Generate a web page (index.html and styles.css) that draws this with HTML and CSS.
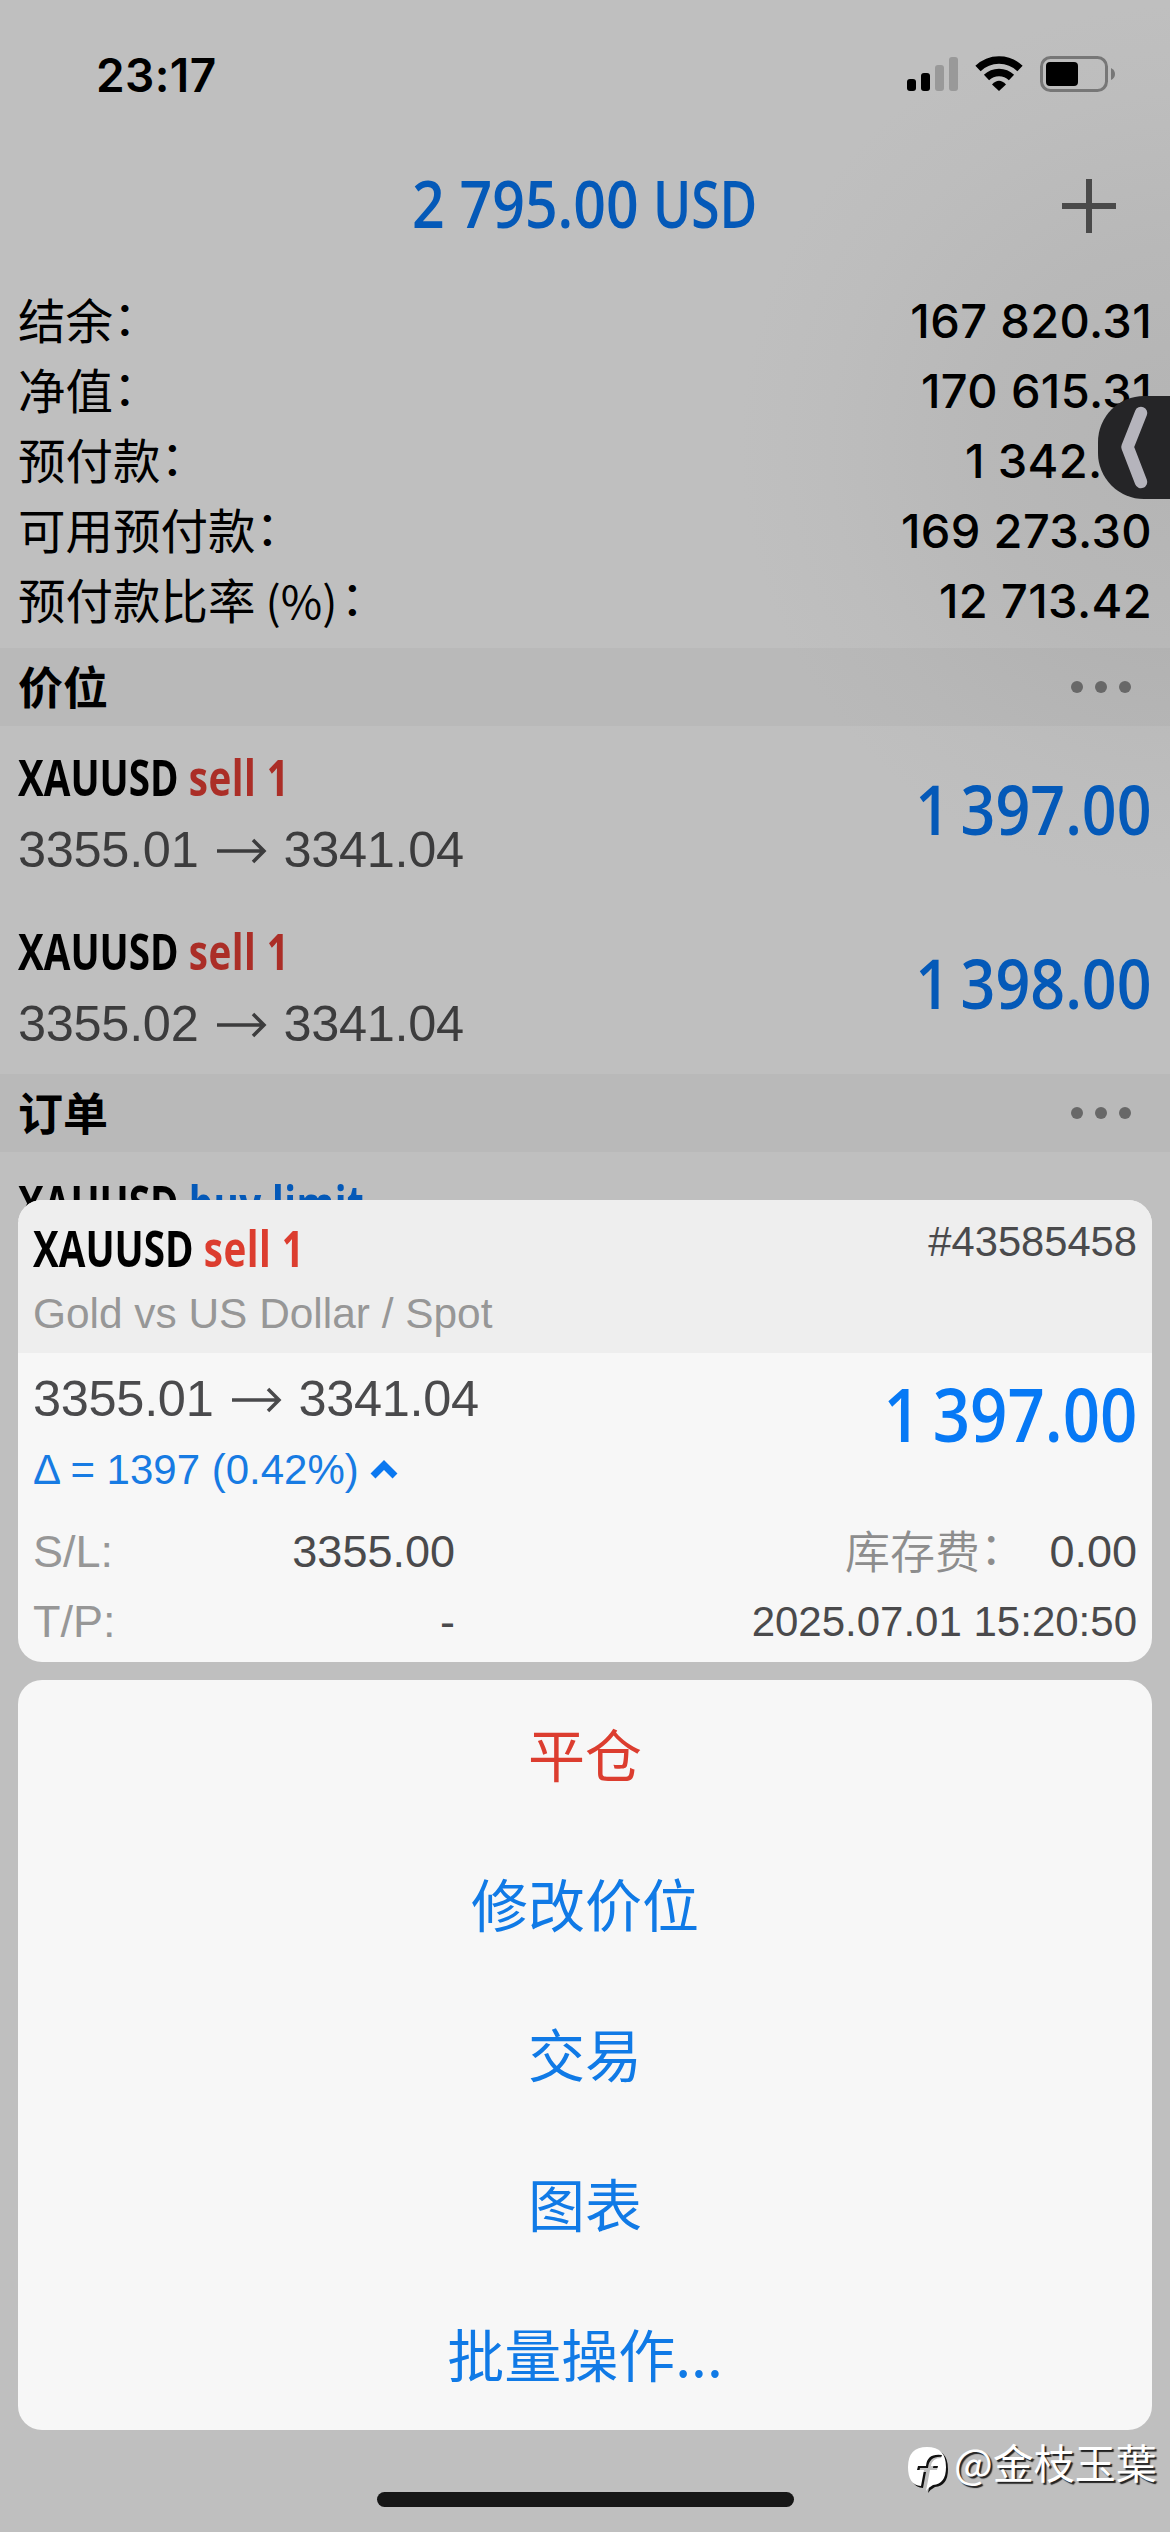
FILE: index.html
```html
<!DOCTYPE html>
<html lang="zh-CN">
<head>
<meta charset="utf-8">
<title>Trade</title>
<link rel="stylesheet" href="styles.css">
</head>
<body>
<div class="phone">
  <main class="screen">
    <header class="status">
      <span class="clock">23:17</span>
      <svg class="status-icons" width="212" height="40" viewBox="905 54 212 40">
        <rect x="907" y="79" width="9" height="12" rx="3"/>
        <rect x="921" y="73" width="9" height="18" rx="3"/>
        <rect x="935" y="65" width="9" height="26" rx="3" fill="#999"/>
        <rect x="949" y="57" width="9" height="34" rx="3" fill="#999"/>
        <path d="M978 68.500A30 30 0 0 1 1020 68.500M986.500 77.500A18 18 0 0 1 1011.500 77.500" fill="none" stroke="#000" stroke-width="7.500"/>
        <path d="M992 84.500Q999 77 1006 84.500L999 91Z"/>
        <rect x="1041.500" y="57.500" width="65" height="33" rx="9" fill="none" stroke="#777" stroke-width="3"/>
        <rect x="1046" y="62" width="32" height="24" rx="4"/>
        <path d="M1111 68Q1115 70 1115 74T1111 80Z" fill="#777"/>
      </svg>
    </header>

    <div class="titlebar">
      <h1 class="total"><span class="amount"><span>2 795.00</span></span><span class="unit"><span>USD</span></span></h1>
      <svg class="plus" width="54" height="54" viewBox="0 0 54 54"><path d="M27 0V54M0 27H54" stroke="#4a4a4a" stroke-width="6"/></svg>
    </div>

    <section class="summary">
      <div class="row"><span class="name">结余<i>：</i></span><span class="num">167 820.31</span></div>
      <div class="row"><span class="name">净值<i>：</i></span><span class="num">170 615.31</span></div>
      <div class="row"><span class="name">预付款<i>：</i></span><span class="num">1 342.01</span></div>
      <div class="row"><span class="name">可用预付款<i>：</i></span><span class="num">169 273.30</span></div>
      <div class="row"><span class="name">预付款比率<b>(%)</b><i>：</i></span><span class="num">12 713.42</span></div>
    </section>

    <div class="band"><h2>价位</h2><span class="dots"><u></u><u></u><u></u></span></div>

    <article class="position">
      <div class="deal">
        <p class="label">XAUUSD <span class="sell-dim">sell 1</span></p>
        <div class="prices"><span>3355.01</span><svg width="50" height="26" viewBox="0 0 50 26"><path d="M0 13H47M36 2L47 13L36 24"/></svg><span>3341.04</span></div>
      </div>
      <p class="profit">1 397.00</p>
    </article>

    <article class="position">
      <div class="deal">
        <p class="label">XAUUSD <span class="sell-dim">sell 1</span></p>
        <div class="prices"><span>3355.02</span><svg width="50" height="26" viewBox="0 0 50 26"><path d="M0 13H47M36 2L47 13L36 24"/></svg><span>3341.04</span></div>
      </div>
      <p class="profit">1 398.00</p>
    </article>

    <div class="band"><h2>订单</h2><span class="dots"><u></u><u></u><u></u></span></div>

    <article class="position">
      <p class="label">XAUUSD <span class="buy-dim">buy limit</span></p>
    </article>
  </main>

  <div class="handle">
    <svg width="72" height="104" viewBox="1098 396 72 104"><path d="M1141 413L1127.500 447L1141 482" fill="none" stroke="#b5b4bc" stroke-width="12.500" stroke-linecap="round" stroke-linejoin="round"/></svg>
  </div>

  <div class="sheet">
    <section class="card">
      <header class="card-head">
        <div>
          <p class="label">XAUUSD <span class="sell">sell 1</span></p>
          <p class="desc">Gold vs US Dollar / Spot</p>
        </div>
        <span class="ticket">#43585458</span>
      </header>
      <div class="card-main">
        <div>
          <div class="prices"><span>3355.01</span><svg width="50" height="26" viewBox="0 0 50 26"><path d="M0 13H47M36 2L47 13L36 24"/></svg><span>3341.04</span></div>
          <div class="delta"><span>Δ = 1397 (0.42%)</span><svg width="28" height="20" viewBox="0 0 28 20"><path d="M3 16L14 5L25 16" fill="none" stroke="#0b78f0" stroke-width="7"/></svg></div>
        </div>
        <p class="profit big">1 397.00</p>
      </div>
      <div class="facts">
        <span class="key">S/L:</span><span class="val">3355.00</span><span class="swap">库存费<i>：</i></span><span class="val">0.00</span>
        <span class="key">T/P:</span><span class="val">-</span><span class="time">2025.07.01 15:20:50</span>
      </div>
    </section>
    <nav class="menu">
      <a class="danger">平仓</a>
      <a>修改价位</a>
      <a>交易</a>
      <a>图表</a>
      <a>批量操作<em>...</em></a>
    </nav>
  </div>

  <div class="home"></div>
  <div class="watermark">
    <svg width="44" height="48" viewBox="0 0 44 48">
      <path d="M2 22Q2 2 21 2T40 22Q40 39 27 40Q23 42 20 46L24 25H31L32 21H25Q26 13 35 13L36 10Q21 8 20 21H12L11 25H18L15 41Q2 40 2 22Z" fill="#fff"/>
    </svg>
    <span>@金枝玉葉</span>
  </div>
</div>
</body>
</html>
```
FILE: styles.css
```css
* { box-sizing: border-box; margin: 0; padding: 0; }
body { width: 1170px; height: 2532px; overflow: hidden; background: #bfbfbf; }
i, em { font-style: normal; }

.phone {
  position: relative;
  width: 1170px;
  height: 2532px;
  overflow: hidden;
  background: radial-gradient(circle 440px at 1180px 445px, #b4b4b4 0%, #b8b8b8 45%, #bdbdbd 80%, #bfbfbf 100%);
  font-family: "Liberation Sans", "Noto Sans CJK SC", sans-serif;
  color: #000;
}
.phone svg { display: block; flex: none; }

/* condensed headings and amounts */
.label {
  width: max-content;
  height: 52px;
  font: 700 50.5px/45px "Open Sans", sans-serif;
  white-space: nowrap;
  transform: scaleX(.765);
  transform-origin: left;
}
.profit {
  height: 60px;
  font: 650 68.5px/53px "Open Sans", sans-serif;
  word-spacing: -6px;
  white-space: nowrap;
  color: #0459b8;
  transform: scaleX(.89);
  transform-origin: right;
}
.profit.big { font-size: 74px; line-height: 57px; color: #0779f5; transform: scaleX(.883); }
.sell-dim { color: #ab2e27; letter-spacing: .6px; }
.buy-dim { color: #0459b8; letter-spacing: .5px; }
.sell { color: #dc3d2f; letter-spacing: .6px; }

.screen { display: flex; flex-direction: column; }

.status { display: flex; justify-content: space-between; height: 150px; padding: 54px 53px 0 96px; }
.clock { font: 600 46px/42px Inter, sans-serif; letter-spacing: .4px; }

.titlebar { display: grid; grid-template-columns: 1fr auto 1fr; align-items: start; height: 138px; padding: 20px 54px 0; }
.total { grid-column: 2; display: flex; gap: 12px; font: 650 66px/65px "Open Sans", sans-serif; white-space: nowrap; color: #0459b8; }
.total span span { display: inline-block; transform-origin: left; }
.amount { width: 229px; }
.amount span { transform: scaleX(.866); }
.unit { width: 105px; }
.unit span { transform: scaleX(.78); }
.plus { justify-self: end; margin-top: 9px; }

.summary { height: 360px; padding: 0 18px; }
.row { display: flex; justify-content: space-between; height: 70px; }
.name { font-family: "Noto Sans CJK SC", sans-serif; font-size: 47.5px; line-height: 62px; white-space: nowrap; }
.name i { position: relative; top: -4px; }
.name b { font-weight: 400; font-size: 45px; margin: 0 3px 0 10px; }
.num { font-family: Inter, sans-serif; font-weight: 500; font-size: 47px; line-height: 66px; letter-spacing: .35px; }

.band { display: flex; justify-content: space-between; align-items: center; height: 78px; padding: 0 39px 0 18px; background: rgba(0, 0, 0, .032); }
.band h2 { height: 78px; font: 700 45px/75px "Noto Sans CJK SC", sans-serif; }
.dots { display: flex; gap: 12px; }
.dots u { width: 12px; height: 12px; border-radius: 50%; background: #686868; }

.position { display: flex; justify-content: space-between; height: 174px; padding: 28px 18px 0 18px; }
.prices { display: flex; align-items: center; height: 58px; font-size: 50.5px; line-height: 58px; letter-spacing: -.3px; color: #3c3c3d; }
.deal .prices { margin-top: 15px; }
.prices svg { margin: 1px 16px 0 19px; fill: none; stroke: currentColor; stroke-width: 3.5; }
.position .profit { margin-top: 28px; }

.handle { position: absolute; left: 1098px; top: 396px; width: 72px; height: 103px; border-radius: 46px 0 0 46px; background: #252527; }

.sheet { position: absolute; left: 18px; right: 18px; top: 1200px; display: flex; flex-direction: column; gap: 18px; }
.card { height: 462px; border-radius: 24px; overflow: hidden; background: #f7f7f7; }
.card-head { display: flex; justify-content: space-between; height: 153px; padding: 25px 15px 0 15px; background: #eee; }
.desc { margin-top: 13px; font-size: 42.4px; line-height: 48px; color: #979797; white-space: nowrap; }
.ticket { font-size: 41.7px; line-height: 34px; color: #4a4a4c; }
.card-main { display: flex; justify-content: space-between; height: 155px; padding: 17px 15px 0 15px; }
.card .prices { color: #4a4a4c; }
.delta { display: flex; align-items: center; margin-top: 16px; font-size: 42px; line-height: 52px; color: #177be3; }
.delta svg { margin: 0 0 0 11px; }
.profit.big { margin-top: 15px; }
.facts { display: grid; grid-template-columns: 130px 292px 1fr 112px; grid-auto-rows: 70px; padding: 9px 15px 0; font-size: 45px; line-height: 70px; color: #4a4a4c; white-space: nowrap; }
.key { color: #979797; }
.val { text-align: right; }
.swap { text-align: right; font-family: "Noto Sans CJK SC", sans-serif; font-weight: 350; line-height: 66px; color: #8d8d8d; }
.swap i { position: relative; top: -4px; }
.time { grid-column: 3 / 5; text-align: right; font-size: 42px; }

.menu { display: flex; flex-direction: column; height: 750px; border-radius: 24px; background: #f7f7f7; }
.menu a { height: 150px; text-align: center; font: 400 57px/145px "Noto Sans CJK SC", sans-serif; color: #107ae6; }
.menu .danger { color: #dc3d2f; }

.home { position: absolute; left: 377px; top: 2492px; width: 417px; height: 15px; border-radius: 8px; background: #161616; }

.watermark { position: absolute; left: 906px; top: 2440px; display: flex; font: 400 41px/43px "Noto Sans CJK TC", sans-serif; color: #fff; text-shadow: 2px 2px 1px #222; white-space: nowrap; }
.watermark svg { margin: 5px 4px 0 0; filter: drop-shadow(2px 2px .5px #111); }
```
